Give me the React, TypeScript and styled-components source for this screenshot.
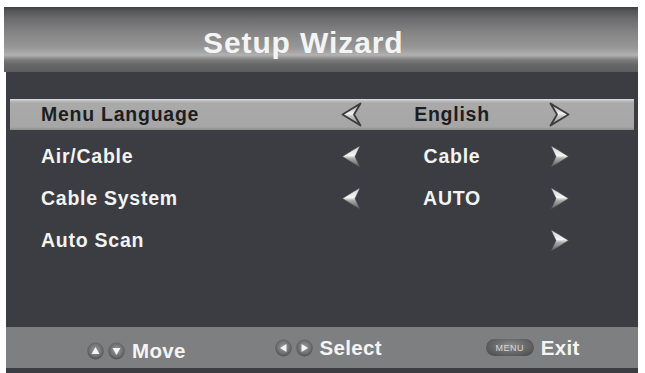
import React from "react";
import styled, { createGlobalStyle } from "styled-components";

const Global = createGlobalStyle`
  html, body { margin: 0; padding: 0; background: #ffffff; }
  body { font-family: "Liberation Sans", Arial, sans-serif; overflow: hidden; }
`;

const Panel = styled.div`
  margin: 7px 0 0 6px;
  width: 632px;
  display: flex;
  flex-direction: column;
  background: #3b3d42;
`;

const Header = styled.div`
  height: 65px;
  display: flex;
  align-items: center;
  padding-left: 199px;
  margin-left: -2px;
  background: linear-gradient(
    to bottom,
    #3f4042 0px,
    #555658 4px,
    #6c6c6e 12px,
    #858586 26px,
    #969697 40px,
    #a9a9a9 46px,
    #b3b3b3 48px,
    #7a7a7b 53px,
    #666667 58px,
    #5d5e60 65px
  );
`;

const Title = styled.h1`
  margin: 0;
  padding-top: 6px;
  font-size: 30px;
  font-weight: bold;
  color: #f4f4f4;
  letter-spacing: 0.9px;
`;

const Body = styled.div`
  height: 255px;
  padding: 27px 4px 0 4px;
  box-sizing: border-box;
  display: flex;
  flex-direction: column;
  gap: 11px;
`;

const Row = styled.div<{ $active?: boolean }>`
  height: 31px;
  display: grid;
  grid-template-columns: 331px 22px 185px 22px;
  align-items: center;
  box-sizing: border-box;
  background: ${(p) =>
    p.$active
      ? "linear-gradient(to bottom, #e0e0e0 0px, #bcbcbc 2px, #aaaaaa 4px, #a6a6a6 28px, #8c8c8c 31px)"
      : "transparent"};
  color: ${(p) => (p.$active ? "#1e1e1e" : "#f3f3f3")};
`;

const Label = styled.span`
  padding-left: 31px;
  font-size: 19.5px;
  font-weight: bold;
  letter-spacing: 0.75px;
`;

const Value = styled.span`
  text-align: center;
  padding-right: 7px;
  font-size: 19.5px;
  font-weight: bold;
  letter-spacing: 0.75px;
`;

const ArrowCell = styled.span`
  display: flex;
  align-items: center;
  justify-content: center;
  height: 100%;
`;

const Footer = styled.div`
  height: 41px;
  background: #7e7f81;
  display: flex;
  align-items: center;
  padding-left: 81px;
`;

const Hint = styled.div<{ $gap: number; $drop: number }>`
  display: flex;
  align-items: center;
  margin-left: ${(p) => p.$gap}px;
  transform: translateY(${(p) => p.$drop}px);
`;

const HintText = styled.span`
  margin-left: 7px;
  font-size: 20.5px;
  font-weight: bold;
  color: #f4f4f4;
  letter-spacing: 0.3px;
`;

const KeyRow = styled.span`
  display: flex;
  gap: 4px;
  align-items: center;
`;

const BottomStrip = styled.div`
  height: 6px;
  background: #3b3d42;
`;

const MenuPill = styled.span`
  width: 48px;
  height: 17px;
  border-radius: 9px;
  background: radial-gradient(ellipse at 50% 40%, #8a8a8a 0%, #5a5a5a 70%, #3f3f3f 100%);
  display: flex;
  align-items: center;
  justify-content: center;
  font-size: 9px;
  letter-spacing: 0.5px;
  color: #d8d8d8;
  font-family: "Liberation Sans Narrow", "Liberation Sans", Arial, sans-serif;
`;

function Arrow({ dir, active }: { dir: "left" | "right"; active?: boolean }) {
  const id = `g-${dir}-${active ? "a" : "n"}`;
  return (
    <svg width={22} height={25} viewBox="0 0 22 25">
      <defs>
        <linearGradient id={id} x1="0" y1="0" x2="0" y2="1">
          {active ? (
            <>
              <stop offset="0" stopColor="#9a9a9a" />
              <stop offset="0.45" stopColor="#f2f2f2" />
              <stop offset="0.6" stopColor="#c4c4c4" />
              <stop offset="1" stopColor="#8a8a8a" />
            </>
          ) : (
            <>
              <stop offset="0" stopColor="#cfcfcf" />
              <stop offset="0.45" stopColor="#f6f6f6" />
              <stop offset="0.6" stopColor="#a8a8a8" />
              <stop offset="1" stopColor="#5a5a5a" />
            </>
          )}
        </linearGradient>
      </defs>
      <g transform={dir === "left" ? "translate(22,0) scale(-1,1)" : undefined}>
        <path
          d={
            active
              ? "M2.5,1.5 L20.5,12.5 L2.5,23.5 L9,12.5 Z"
              : "M3,2 Q4,2 20.5,12.5 Q4,23 3,23 L8,12.5 Z"
          }
          fill={`url(#${id})`}
          stroke={active ? "#3c3c3c" : "#4a4a4a"}
          strokeWidth={active ? 1.8 : 0.6}
          strokeLinejoin="round"
        />
      </g>
    </svg>
  );
}

function RoundKey({ dir }: { dir: "up" | "down" | "left" | "right" }) {
  const tri: Record<string, string> = {
    up: "M8.5,4.5 L12.5,11.5 L4.5,11.5 Z",
    down: "M4.5,5.5 L12.5,5.5 L8.5,12.5 Z",
    left: "M5,8.5 L11.5,4.5 L11.5,12.5 Z",
    right: "M5.5,4.5 L12,8.5 L5.5,12.5 Z",
  };
  const id = `rk-${dir}`;
  return (
    <svg width={17} height={18} viewBox="0 0 17 17">
      <defs>
        <radialGradient id={id} cx="0.5" cy="0.45" r="0.55">
          <stop offset="0" stopColor="#9c9c9c" />
          <stop offset="0.7" stopColor="#6f6f6f" />
          <stop offset="1" stopColor="#505050" />
        </radialGradient>
      </defs>
      <ellipse cx={8.5} cy={8.5} rx={8.2} ry={8.4} fill={`url(#${id})`} />
      <path d={tri[dir]} fill="#f5f5f5" />
    </svg>
  );
}

type Item = { label: string; value?: string; left?: boolean; right?: boolean };

const items: Item[] = [
  { label: "Menu Language", value: "English", left: true, right: true },
  { label: "Air/Cable", value: "Cable", left: true, right: true },
  { label: "Cable System", value: "AUTO", left: true, right: true },
  { label: "Auto Scan", right: true },
];

export default function App() {
  return (
    <>
      <Global />
      <Panel>
        <Header>
          <Title>Setup Wizard</Title>
        </Header>
        <Body>
          {items.map((it, i) => (
            <Row key={it.label} $active={i === 0}>
              <Label>{it.label}</Label>
              <ArrowCell>{it.left && <Arrow dir="left" active={i === 0} />}</ArrowCell>
              <Value>{it.value ?? ""}</Value>
              <ArrowCell>{it.right && <Arrow dir="right" active={i === 0} />}</ArrowCell>
            </Row>
          ))}
        </Body>
        <Footer>
          <Hint $gap={0} $drop={3}>
            <KeyRow>
              <RoundKey dir="up" />
              <RoundKey dir="down" />
            </KeyRow>
            <HintText>Move</HintText>
          </Hint>
          <Hint $gap={89} $drop={0}>
            <KeyRow>
              <RoundKey dir="left" />
              <RoundKey dir="right" />
            </KeyRow>
            <HintText>Select</HintText>
          </Hint>
          <Hint $gap={104} $drop={0}>
            <MenuPill>MENU</MenuPill>
            <HintText>Exit</HintText>
          </Hint>
        </Footer>
        <BottomStrip />
      </Panel>
    </>
  );
}
